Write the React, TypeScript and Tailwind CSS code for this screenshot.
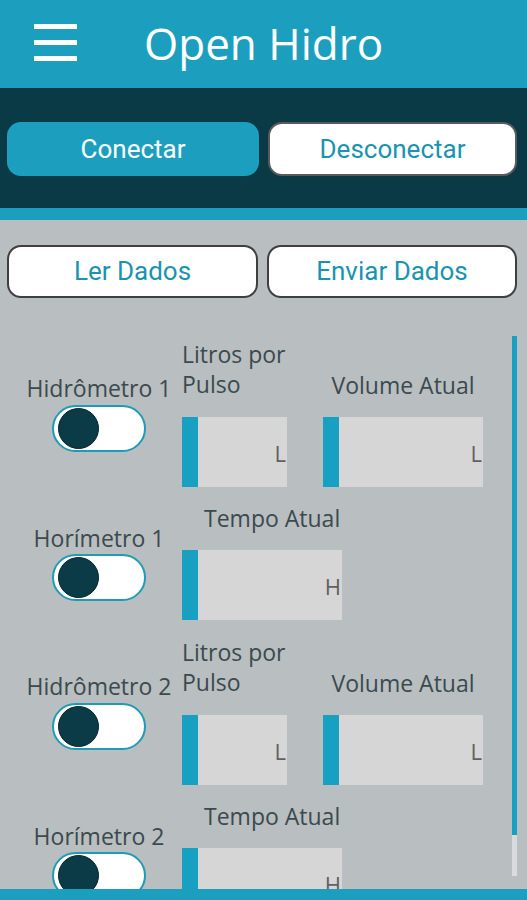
import React from 'react';

const sans = "font-['Open_Sans','Liberation_Sans',sans-serif]";
const roboto = "font-['Roboto','Liberation_Sans',sans-serif]";

function Toggle() {
  return (
    <div className="w-[94px] h-[47px] rounded-full bg-white border-2 border-[#1f9bb5] flex items-center pl-[4px]">
      <div className="w-[41px] h-[41px] rounded-full bg-[#0c3b48] border-[1.5px] border-[#08222b]" />
    </div>
  );
}

function Field({ unit, width }: { unit: string; width: string }) {
  return (
    <div className={`${width} h-[70px] bg-[#d6d6d6] flex items-center`}>
      <div className="w-[16px] h-full bg-[#18a0c2]" />
      <div className={`flex-1 text-right pr-[1px] text-[22px] text-[#616161] leading-none pt-[2px] ${sans}`}>
        {unit}
      </div>
    </div>
  );
}

function HidroRow({ n }: { n: number }) {
  return (
    <div className="h-[149px] flex">
      {/* left: name + switch */}
      <div className="w-[182px] pl-[16px] pt-[34px] flex flex-col items-center">
        <div className="text-[23px] leading-[30px] text-[#3b4a4e] whitespace-nowrap">Hidrômetro {n}</div>
        <div className="mt-[2px]">
          <Toggle />
        </div>
      </div>
      <div className="flex gap-[36px]">
        <div className="w-[105px] flex flex-col">
          <div className="h-[60px] flex flex-col justify-end text-[23px] leading-[30px] text-[#3b4a4e]">
            <div className="whitespace-nowrap">Litros por</div>
            <div>Pulso</div>
          </div>
          <div className="mt-[18px]">
            <Field unit="L" width="w-[105px]" />
          </div>
        </div>
        <div className="w-[160px] flex flex-col">
          <div className="h-[61px] flex flex-col justify-end text-[23px] leading-[30px] text-[#3b4a4e] text-center">
            <div className="whitespace-nowrap">Volume Atual</div>
          </div>
          <div className="mt-[17px]">
            <Field unit="L" width="w-[160px]" />
          </div>
        </div>
      </div>
    </div>
  );
}

function HoriRow({ n }: { n: number }) {
  return (
    <div className="h-[149px] flex">
      <div className="w-[182px] pl-[16px] pt-[35px] flex flex-col items-center">
        <div className="text-[23px] leading-[30px] text-[#3b4a4e] whitespace-nowrap">Horímetro {n}</div>
        <div className="mt-[1px]">
          <Toggle />
        </div>
      </div>
      <div className="w-[160px] pt-[15px] flex flex-col">
        <div className="pl-[22px] text-[23px] leading-[30px] text-[#3b4a4e] whitespace-nowrap">Tempo Atual</div>
        <div className="mt-[17px]">
          <Field unit="H" width="w-[160px]" />
        </div>
      </div>
    </div>
  );
}

export default function App() {
  return (
    <div className={`w-[527px] h-[900px] flex flex-col overflow-hidden bg-[#b9bec0] ${sans}`}>
      {/* Top bar */}
      <div className="h-[88px] shrink-0 bg-[#1c9fbe] flex items-center pl-[34px]">
        <div className="flex flex-col gap-[11px] mb-[3px]">
          <div className="w-[43px] h-[5px] bg-white" />
          <div className="w-[43px] h-[5px] bg-white" />
          <div className="w-[43px] h-[5px] bg-white" />
        </div>
        <div className="ml-[67px] mb-[2px] text-[44px] leading-none text-white">Open Hidro</div>
      </div>

      {/* Connection */}
      <div className="h-[120px] shrink-0 bg-[#0b3a47] pt-[34px] pl-[7px] flex gap-[9px] items-start">
        <button className={`w-[252px] h-[54px] rounded-[14px] bg-[#1c9fbe] text-white text-[26px] ${roboto}`}>
          Conectar
        </button>
        <button className={`w-[249px] h-[54px] rounded-[14px] bg-white border-2 border-[#5a5a5a] text-[#1a93b0] text-[26px] ${roboto}`}>
          Desconectar
        </button>
      </div>
      <div className="h-[12px] shrink-0 bg-[#1c9fbe]" />

      {/* Data buttons */}
      <div className="shrink-0 pt-[25px] pl-[7px] flex gap-[9px]">
        <button className={`w-[251px] h-[53px] rounded-[14px] bg-white border-2 border-[#3f3f3f] text-[#1a93b0] text-[26px] ${roboto}`}>
          Ler Dados
        </button>
        <button className={`w-[250px] h-[53px] rounded-[14px] bg-white border-2 border-[#3f3f3f] text-[#1a93b0] text-[26px] ${roboto}`}>
          Enviar Dados
        </button>
      </div>

      {/* Meter list */}
      <div className="relative flex-1 mt-[38px] overflow-hidden">
        <div className="pt-[3px]">
          <HidroRow n={1} />
          <HoriRow n={1} />
          <HidroRow n={2} />
          <HoriRow n={2} />
        </div>
        <div className="absolute top-0 right-[10px] w-[5px] h-[540px] bg-[#d9dbdc]">
          <div className="w-full h-[499px] bg-[#1a9fc0]" />
        </div>
      </div>
      <div className="h-[11px] shrink-0 bg-[#1c9fbe]" />
    </div>
  );
}
